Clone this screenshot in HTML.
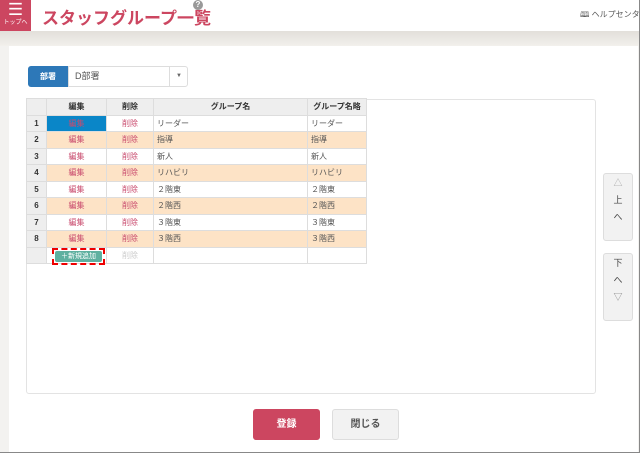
<!DOCTYPE html>
<html><head><meta charset="utf-8"><style>
*{box-sizing:border-box;margin:0;padding:0}
body{width:640px;height:453px;overflow:hidden;background:#fff;font-family:"Liberation Sans","Noto Sans CJK JP",sans-serif;position:relative;}
.a{position:absolute}
.hdr{left:0;top:0;width:640px;height:31px;background:#fff}
.menu{left:0;top:0;width:31px;height:31px;background:#cc4660;color:#fff;text-align:center}
.band{left:0;top:31px;width:640px;height:15px;background:linear-gradient(#e2dfda,#f2f0ec)}
.main{left:0;top:46px;width:640px;height:407px;background:#f3f2f0}
.panel{left:9px;top:46px;width:629px;height:407px;background:#fff}
table{border-collapse:collapse;font-size:8px;color:#555}
td,th{border:1px solid #ddd;height:16.5px;padding:0 3px}
th{background:#eee;font-weight:bold;color:#333;text-align:center}
td.n{background:#eee;font-weight:bold;text-align:center;color:#333}
td.e,td.d{text-align:center;color:#c94b6e}
tr.o td{background:#fde3c6}
tr.o td.n{background:#eee}
.btn{border-radius:3px;font-size:10px;text-align:center;font-weight:bold}
.side{background:#f2f2f2;border:1px solid #ddd;border-radius:3px;font-size:9px;color:#444;text-align:center;line-height:17px}
</style></head><body>
<div class="a main"></div>
<div class="a panel"></div>
<div class="a hdr"></div>
<div class="a band"></div>
<div class="a" style="left:0;top:0;width:640px;height:453px;border:1px solid #888;border-left:0;border-top:0"></div>
<div class="a menu"><div style="font-size:17px;line-height:20px">☰</div><div style="font-size:6px;line-height:6px">トップへ</div></div>
<div class="a" style="left:42px;top:4px;font-size:17px;font-weight:bold;color:#cc4660">スタッフグループ一覧</div>
<div class="a" style="left:193px;top:0px;width:10px;height:10px;border-radius:50%;background:#999;color:#fff;font-size:8px;text-align:center;line-height:10px;font-weight:bold">?</div>
<div class="a" style="left:580px;top:9px;font-size:8px;color:#555;white-space:nowrap">🕮 ヘルプセンター</div>
<div class="a btn" style="left:28px;top:66px;width:40px;height:21px;background:#2d78b8;color:#fff;line-height:21px;font-size:8px;border-radius:3px 0 0 3px">部署</div>
<div class="a" style="left:68px;top:66px;width:120px;height:21px;border:1px solid #ddd;border-radius:0 3px 3px 0;font-size:9px;color:#555;line-height:19px;padding-left:6px">D部署<span class="a" style="left:100px;top:0;width:1px;height:19px;background:#ddd"></span><span class="a" style="left:107px;top:0;font-size:6px;color:#666">▼</span></div>
<div class="a" style="left:26px;top:99px;width:570px;height:295px;border:1px solid #e3e3e3;border-radius:3px"></div>
<table class="a" style="left:26px;top:98px;width:341px">
<tr><th style="width:20px"></th><th style="width:60px">編集</th><th style="width:47px">削除</th><th style="width:154px">グループ名</th><th>グループ名略</th></tr>
<tr><td class="n">1</td><td class="e" style="background:#0a86c8">編集</td><td class="d">削除</td><td>リーダー</td><td>リーダー</td></tr>
<tr class="o"><td class="n">2</td><td class="e">編集</td><td class="d">削除</td><td>指導</td><td>指導</td></tr>
<tr><td class="n">3</td><td class="e">編集</td><td class="d">削除</td><td>新人</td><td>新人</td></tr>
<tr class="o"><td class="n">4</td><td class="e">編集</td><td class="d">削除</td><td>リハビリ</td><td>リハビリ</td></tr>
<tr><td class="n">5</td><td class="e">編集</td><td class="d">削除</td><td>２階東</td><td>２階東</td></tr>
<tr class="o"><td class="n">6</td><td class="e">編集</td><td class="d">削除</td><td>２階西</td><td>２階西</td></tr>
<tr><td class="n">7</td><td class="e">編集</td><td class="d">削除</td><td>３階東</td><td>３階東</td></tr>
<tr class="o"><td class="n">8</td><td class="e">編集</td><td class="d">削除</td><td>３階西</td><td>３階西</td></tr>
<tr><td class="n" style="background:#eee"></td><td></td><td class="d" style="color:#ccc">削除</td><td></td><td></td></tr>
</table>
<div class="a" style="left:52px;top:248px;width:53px;height:17px;border:2px dashed #e00;padding:1px"><div style="background:#5fb0a0;color:#fff;font-size:7px;text-align:center;line-height:11px;border-radius:2px">＋新規追加</div></div>
<div class="a side" style="left:603px;top:173px;width:30px;height:68px;padding-top:1px"><div style="color:#aaa">△</div><div>上</div><div>へ</div></div>
<div class="a side" style="left:603px;top:253px;width:30px;height:68px;padding-top:1px"><div>下</div><div>へ</div><div style="color:#888">▽</div></div>
<div class="a btn" style="left:253px;top:409px;width:67px;height:31px;background:#cc4660;color:#fff;line-height:31px">登録</div>
<div class="a btn" style="left:332px;top:409px;width:67px;height:31px;background:#f2f2f2;border:1px solid #ddd;color:#555;line-height:29px">閉じる</div>
</body></html>
